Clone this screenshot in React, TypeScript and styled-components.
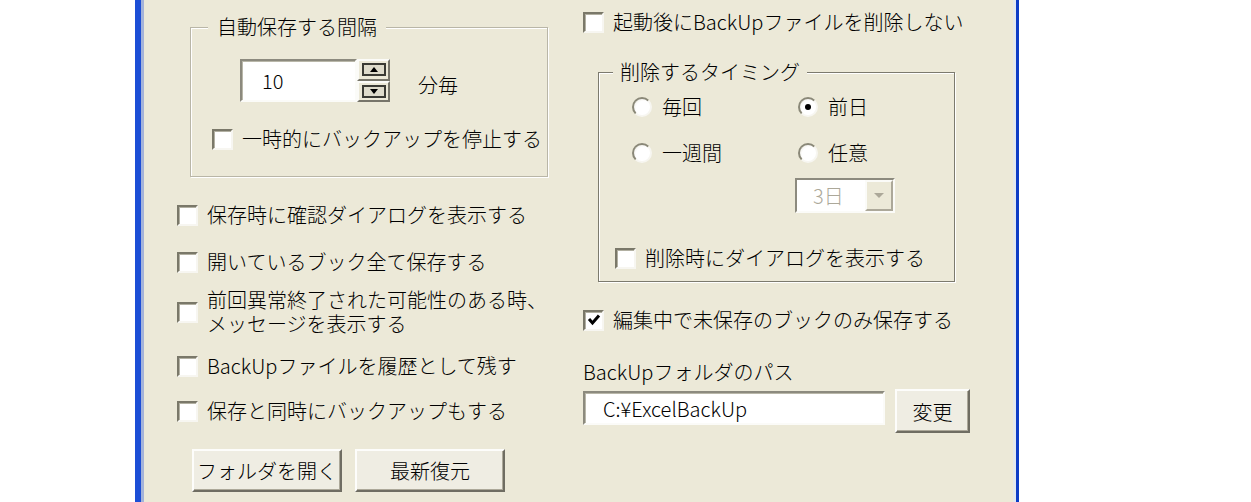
import styled, { createGlobalStyle } from "styled-components";

const GlobalStyle = createGlobalStyle`
  html, body {
    margin: 0;
    background: #fff;
  }
  body {
    font-family: "Noto Sans CJK JP", "Noto Sans", sans-serif;
    font-size: 20px;
    font-weight: 300;
    color: #000;
  }
`;

const Window = styled.div`
  box-sizing: border-box;
  width: 884px;
  height: 502px;
  margin-left: 135px;
  overflow: hidden;
  background: #ece9d8;
  border-left: 6px solid #1c4ed6;
  border-right: 3px solid #0c3cc6;
  box-shadow: inset 3px 0 0 #a4b3da, inset -3px 0 0 #e2e8ee;
  padding-left: 36px;
  display: grid;
  grid-template-columns: 406px 1fr;
`;

const Column = styled.div`
  display: flex;
  flex-direction: column;
  align-items: flex-start;
`;

const GroupBox = styled.fieldset<{ $w: number; $mt: number; $ml: number; $pl: number; $pb: number; $line: string }>`
  box-sizing: border-box;
  width: ${(p) => p.$w}px;
  margin: ${(p) => p.$mt}px 0 0 ${(p) => p.$ml}px;
  padding: 0 0 ${(p) => p.$pb}px ${(p) => p.$pl}px;
  border: 1px solid ${(p) => p.$line};
  box-shadow: 1px 1px 0 #fff, inset 1px 1px 0 #fff;
  display: flex;
  flex-direction: column;
  align-items: flex-start;
  min-width: 0;
`;

const Legend = styled.legend<{ $ml: number; $px: number }>`
  margin-left: ${(p) => p.$ml}px;
  padding: 0 ${(p) => p.$px}px;
  line-height: 24px;
  background: #ece9d8;
`;

const CheckRow = styled.label<{ $mt: number; $ml?: number }>`
  display: flex;
  align-items: center;
  gap: 9px;
  margin-top: ${(p) => p.$mt}px;
  margin-left: ${(p) => p.$ml ?? 0}px;
  line-height: 24px;
  white-space: nowrap;
`;

const TwoLine = styled.span`
  line-height: 24px;
`;

const Box = styled.span`
  box-sizing: border-box;
  flex: none;
  width: 21px;
  height: 21px;
  background: #fff;
  border: 2px solid;
  border-color: #7a7869 #f7f6f1 #f7f6f1 #7a7869;
  box-shadow: inset 1px 1px 0 #b2b0a2;
  display: flex;
  align-items: center;
  justify-content: center;
`;

const CheckBox = ({ checked }: { checked?: boolean }) => (
  <Box>
    {checked && (
      <svg width="14" height="14" viewBox="0 0 14 14">
        <polyline points="2,6 5.5,10 12,2.5" fill="none" stroke="#000" strokeWidth="3" />
      </svg>
    )}
  </Box>
);

const RadioGrid = styled.div`
  display: grid;
  grid-template-columns: 166px auto;
  grid-auto-rows: 24px;
  row-gap: 22px;
  margin: 11px 0 0 17px;
`;

const RadioItem = styled.label`
  display: flex;
  align-items: center;
  gap: 10px;
  line-height: 24px;
`;

const RadioCircle = styled.span<{ $on?: boolean }>`
  box-sizing: border-box;
  flex: none;
  width: 20px;
  height: 20px;
  border-radius: 50%;
  border: 2px solid;
  border-color: #8a8878 #f7f6f1 #f7f6f1 #8a8878;
  background: radial-gradient(circle at 60% 60%, #fff 0 55%, #e4e2d6 100%);
  display: flex;
  align-items: center;
  justify-content: center;
  &::after {
    content: "";
    display: ${(p) => (p.$on ? "block" : "none")};
    width: 6px;
    height: 6px;
    border-radius: 50%;
    background: #000;
  }
`;

const SpinRow = styled.div`
  display: flex;
  align-items: flex-start;
  margin: 20px 0 0 28px;
`;

const Edit = styled.div<{ $w: number; $h: number; $pl: number }>`
  box-sizing: border-box;
  width: ${(p) => p.$w}px;
  height: ${(p) => p.$h}px;
  padding-left: ${(p) => p.$pl}px;
  background: #fff;
  border: 2px solid;
  border-color: #8c8a7e #fbfbf8 #fbfbf8 #8c8a7e;
  box-shadow: inset 1px 1px 0 #b9b7a9;
  display: flex;
  align-items: center;
  white-space: nowrap;
`;

const SpinCol = styled.div`
  display: flex;
  flex-direction: column;
  width: 33px;
  height: 43px;
`;

const SpinBtn = styled.div`
  box-sizing: border-box;
  flex: 1;
  display: flex;
  align-items: center;
  justify-content: center;
  background: #ece9d8;
  border: 2px solid;
  border-color: #fbfbf8 #77756a #77756a #fbfbf8;
`;

const SpinArrow = ({ up }: { up?: boolean }) => (
  <svg width="24" height="13" viewBox="0 0 24 13">
    <rect x="1" y="1" width="22" height="11" fill="#dedbcb" stroke="#3a3a34" strokeWidth="2" />
    <polygon points={up ? "8,9 16,9 12,4" : "8,4 16,4 12,9"} fill="#000" />
  </svg>
);

const Unit = styled.span`
  margin: 14px 0 0 28px;
  line-height: 24px;
`;

const Combo = styled.div`
  box-sizing: border-box;
  width: 100px;
  height: 35px;
  margin: 13px 0 0 180px;
  background: #fff;
  border: 2px solid;
  border-color: #8c8a7e #fbfbf8 #fbfbf8 #8c8a7e;
  display: flex;
  align-items: stretch;
`;

const ComboText = styled.span`
  flex: 1;
  padding-left: 16px;
  color: #aca899;
  line-height: 31px;
`;

const ComboBtn = styled.span`
  box-sizing: border-box;
  width: 28px;
  background: #ece9d8;
  border: 2px solid;
  border-color: #fbfbf8 #aca899 #aca899 #fbfbf8;
  display: flex;
  align-items: center;
  justify-content: center;
  &::after {
    content: "";
    border-left: 5px solid transparent;
    border-right: 5px solid transparent;
    border-top: 5px solid #aca899;
  }
`;

const Button = styled.button<{ $w: number; $h: number }>`
  box-sizing: border-box;
  width: ${(p) => p.$w}px;
  height: ${(p) => p.$h}px;
  padding: 0;
  font: inherit;
  color: #000;
  background: #efede3;
  border: 2px solid;
  border-color: #fdfdfb #6f6d62 #6f6d62 #fdfdfb;
  box-shadow: inset -1px -1px 0 #aca899;
  white-space: nowrap;
`;

const ButtonRow = styled.div`
  display: flex;
  gap: 13px;
  margin: 26px 0 0 15px;
`;

const PlainLabel = styled.div`
  margin-top: 28px;
  line-height: 24px;
  white-space: nowrap;
`;

const PathRow = styled.div`
  display: flex;
  align-items: flex-start;
  gap: 10px;
  margin-top: 5px;
  & > :first-child {
    margin-top: 2px;
  }
`;

export default function App() {
  return (
    <>
      <GlobalStyle />
      <Window>
        <Column>
          <GroupBox $w={358} $mt={15} $ml={13} $pl={21} $pb={25} $line="#b9b6a7">
            <Legend $ml={-4} $px={9}>自動保存する間隔</Legend>
            <SpinRow>
              <Edit $w={117} $h={43} $pl={20}>10</Edit>
              <SpinCol>
                <SpinBtn>
                  <SpinArrow up />
                </SpinBtn>
                <SpinBtn>
                  <SpinArrow />
                </SpinBtn>
              </SpinCol>
              <Unit>分毎</Unit>
            </SpinRow>
            <CheckRow $mt={25}>
              <CheckBox />
              一時的にバックアップを停止する
            </CheckRow>
          </GroupBox>
          <CheckRow $mt={26}>
            <CheckBox />
            保存時に確認ダイアログを表示する
          </CheckRow>
          <CheckRow $mt={23}>
            <CheckBox />
            開いているブック全て保存する
          </CheckRow>
          <CheckRow $mt={14}>
            <CheckBox />
            <TwoLine>
              前回異常終了された可能性のある時、
              <br />
              メッセージを表示する
            </TwoLine>
          </CheckRow>
          <CheckRow $mt={18}>
            <CheckBox />
            BackUpファイルを履歴として残す
          </CheckRow>
          <CheckRow $mt={21}>
            <CheckBox />
            保存と同時にバックアップもする
          </CheckRow>
          <ButtonRow>
            <Button $w={150} $h={43}>フォルダを開く</Button>
            <Button $w={150} $h={43}>最新復元</Button>
          </ButtonRow>
        </Column>
        <Column>
          <CheckRow $mt={10}>
            <CheckBox />
            起動後にBackUpファイルを削除しない
          </CheckRow>
          <GroupBox $w={357} $mt={26} $ml={15} $pl={16} $pb={11} $line="#7c7a6e">
            <Legend $ml={-2} $px={7}>削除するタイミング</Legend>
            <RadioGrid>
              <RadioItem>
                <RadioCircle />
                毎回
              </RadioItem>
              <RadioItem>
                <RadioCircle $on />
                前日
              </RadioItem>
              <RadioItem>
                <RadioCircle />
                一週間
              </RadioItem>
              <RadioItem>
                <RadioCircle />
                任意
              </RadioItem>
            </RadioGrid>
            <Combo>
              <ComboText>3日</ComboText>
              <ComboBtn />
            </Combo>
            <CheckRow $mt={33}>
              <CheckBox />
              削除時にダイアログを表示する
            </CheckRow>
          </GroupBox>
          <CheckRow $mt={26}>
            <CheckBox checked />
            編集中で未保存のブックのみ保存する
          </CheckRow>
          <PlainLabel>BackUpフォルダのパス</PlainLabel>
          <PathRow>
            <Edit $w={302} $h={34} $pl={18}>C:¥ExcelBackUp</Edit>
            <Button $w={75} $h={44}>変更</Button>
          </PathRow>
        </Column>
      </Window>
    </>
  );
}
